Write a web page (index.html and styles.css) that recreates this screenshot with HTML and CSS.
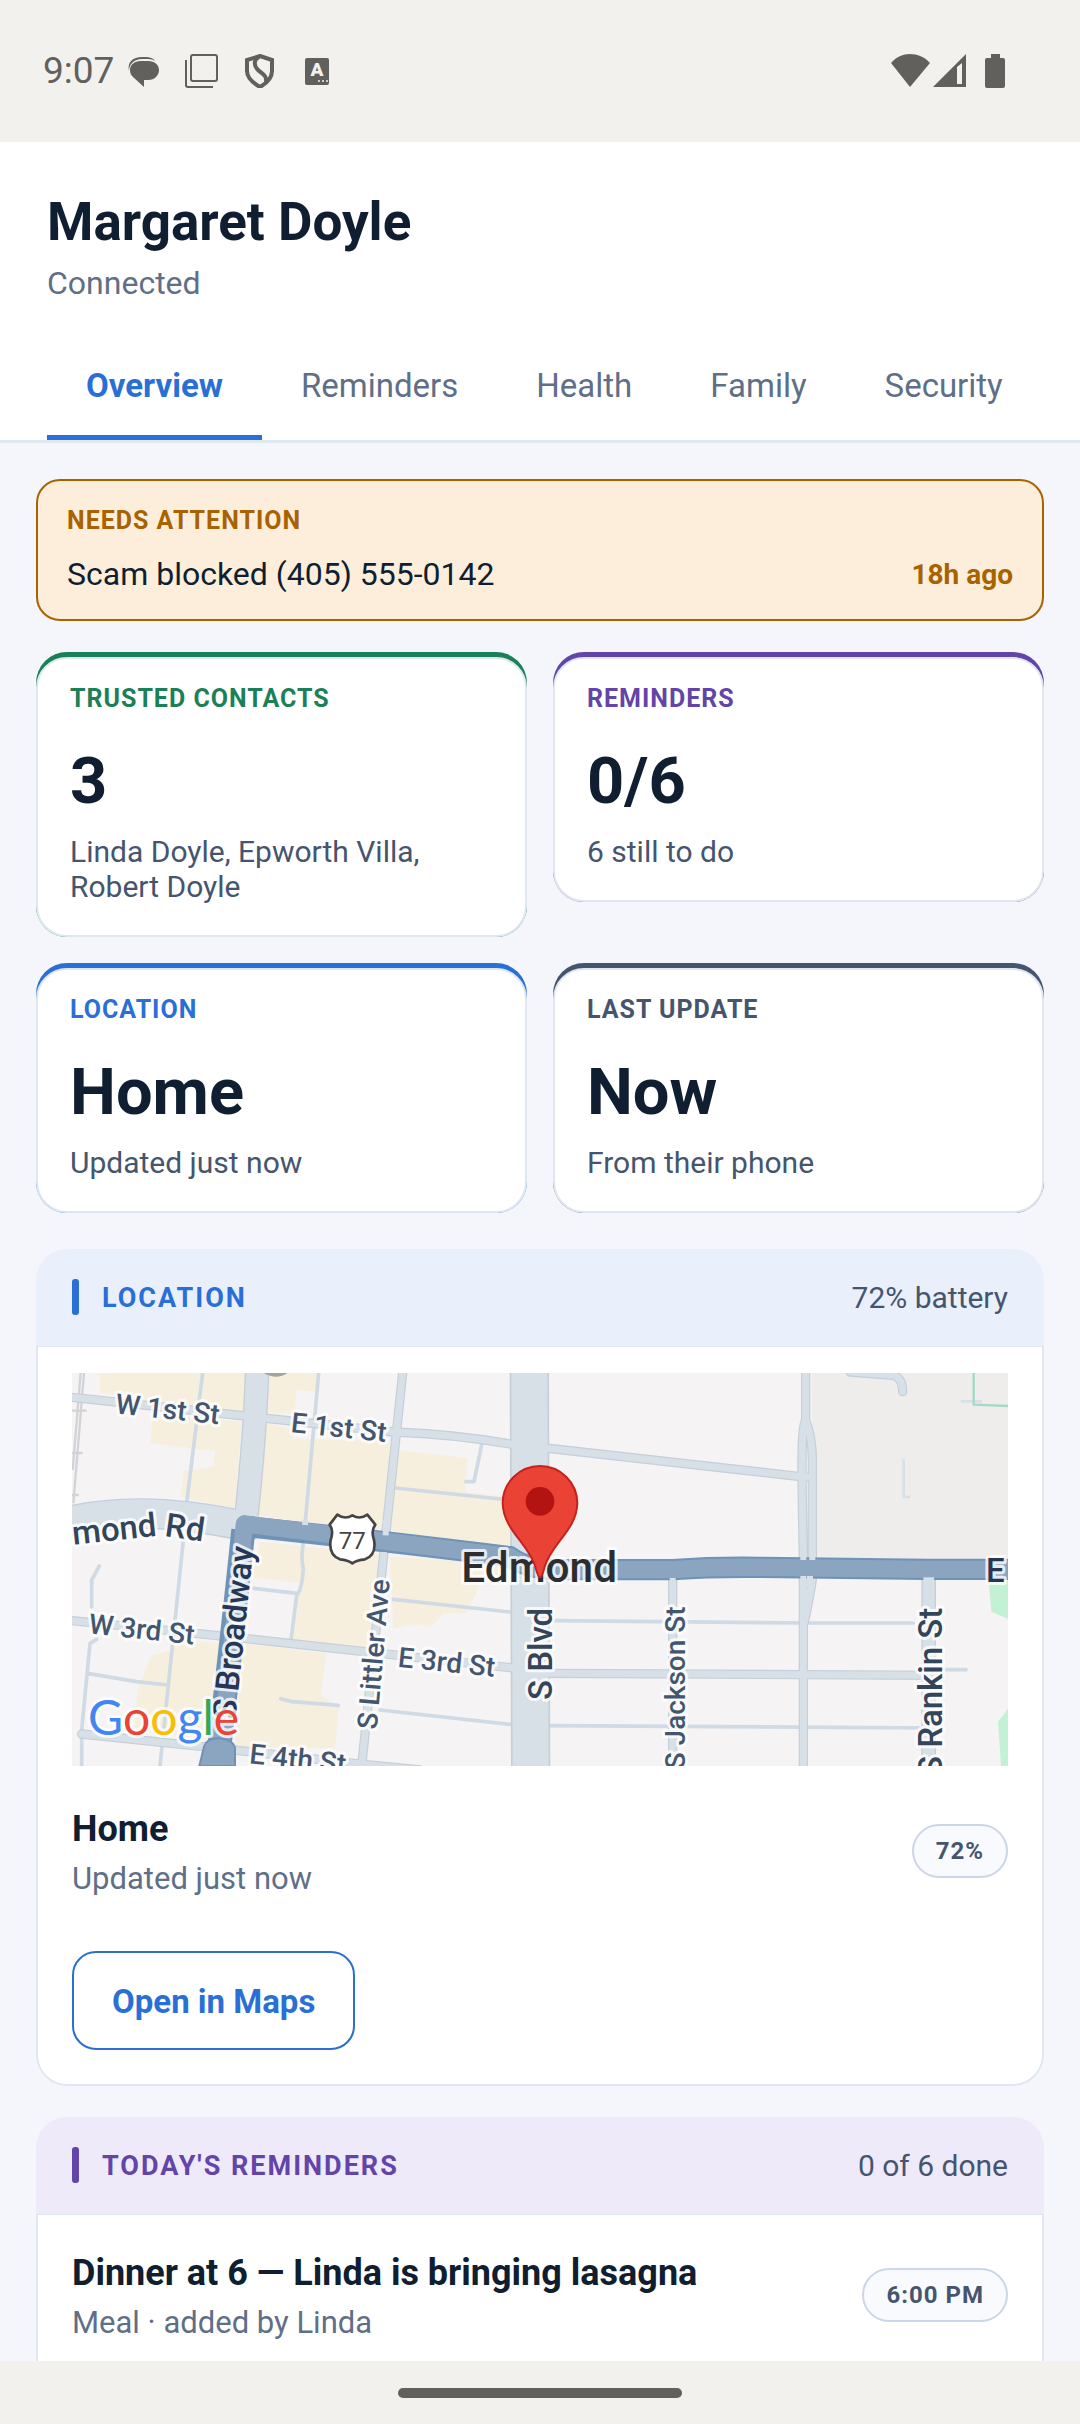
FILE: index.html
```html
<!DOCTYPE html>
<html lang="en">
<head>
    <meta charset="UTF-8">
    <meta name="viewport" content="width=device-width, initial-scale=1.0">
    <title>Margaret Doyle</title>
    <link rel="stylesheet" href="styles.css">
</head>
<body>

    <!-- System status bar -->
    <div class="status-bar">
        <div class="status-left">
            <span class="time">9:07</span>
            <svg class="icon" viewBox="0 0 33 34"><path d="M2 17C0 8 6 3 15 3h4c4 0 7 1 9 4-3-2-6-2-9-2h-4C7 5 2 10 2 17z"/><path d="M14 7h7c7 0 11 4 11 9s-4 10-11 10h-4v7L6 23c-2-2-3-4-3-7 0-5 4-9 11-9z"/></svg>
            <svg class="icon line" viewBox="0 0 33 34"><rect x="6" y="1" width="26" height="26" rx="2"/><path d="M1 6v25q0 2 2 2h25"/></svg>
            <svg class="icon shield" viewBox="0 0 33 34"><path d="M17 2l12 4v11c0 7-5 12-12 16C10 29 4 24 4 17V6z"/><path d="M16 3c-6 3-5 9-1 13s9 5 8 12"/></svg>
            <svg class="icon" viewBox="0 0 33 34"><rect x="4" y="4" width="24" height="27" rx="2"/><text class="badge-letter" x="16" y="22">A</text><g class="dots"><circle cx="18" cy="27" r="1"/><circle cx="22" cy="27" r="1"/><circle cx="26" cy="27" r="1"/></g></svg>
        </div>
        <div class="status-right">
            <div class="network">
                <svg class="wifi" viewBox="0 0 39 34"><path d="M0 9C5 3 12 0 19 0s15 3 20 9L19 33z"/></svg>
                <svg class="icon" viewBox="0 0 33 34"><path fill-rule="evenodd" d="M0 33L33 0v33zM24 13v17h5V9z"/></svg>
            </div>
            <svg class="battery" viewBox="0 0 20 34"><path d="M6 0h9v4h3q2 0 2 2v26q0 2-2 2H2q-2 0-2-2V6q0-2 2-2h4z"/></svg>
        </div>
    </div>

    <!-- Header -->
    <header>
        <h1>Margaret Doyle</h1>
        <p class="connection">Connected</p>
        <nav>
            <a href="#overview" class="tab active">Overview</a>
            <a href="#reminders" class="tab">Reminders</a>
            <a href="#health" class="tab">Health</a>
            <a href="#family" class="tab">Family</a>
            <a href="#security" class="tab">Security</a>
        </nav>
    </header>

    <main>
        <!-- Alert -->
        <section class="alert">
            <h2 class="label">Needs attention</h2>
            <div class="alert-row">
                <p>Scam blocked (405) 555-0142</p>
                <span class="ago">18h ago</span>
            </div>
        </section>

        <!-- Summary cards -->
        <div class="stats">
            <section class="stat green">
                <div class="stat-body">
                    <h2 class="label">Trusted contacts</h2>
                    <p class="value">3</p>
                    <p class="note">Linda Doyle, Epworth Villa, Robert Doyle</p>
                </div>
            </section>
            <section class="stat purple">
                <div class="stat-body">
                    <h2 class="label">Reminders</h2>
                    <p class="value">0/6</p>
                    <p class="note">6 still to do</p>
                </div>
            </section>
            <section class="stat blue">
                <div class="stat-body">
                    <h2 class="label">Location</h2>
                    <p class="value">Home</p>
                    <p class="note">Updated just now</p>
                </div>
            </section>
            <section class="stat slate">
                <div class="stat-body">
                    <h2 class="label">Last update</h2>
                    <p class="value">Now</p>
                    <p class="note">From their phone</p>
                </div>
            </section>
        </div>

        <!-- Location -->
        <section class="panel blue">
            <div class="panel-head">
                <h2>Location</h2>
                <span>72% battery</span>
            </div>
            <div class="panel-body">
                <div class="map-wrap">
                <svg class="map" viewBox="36 39 2808 1179" role="img" aria-label="Map of Edmond">
                    <rect class="land" x="36" y="39" width="2808" height="1179"/>

                    <!-- blocks -->
                    <g class="shops">
                        <path d="M118 39H556L548 156 410 142 120 98V68z"/>
                        <path d="M278 160L545 185 523 445 362 410 372 333 460 320 465 272 272 250z"/>
                        <path d="M627 39H782L776 95 710 90 704 160 617 158z"/>
                        <path d="M612 190L700 205V238L990 242 975 520 590 465z"/>
                        <path d="M1016 270L1222 295 1215 395 1350 412V560L988 520z"/>
                        <path d="M600 545L975 585 930 870 690 840 712 700 728 670 572 652z"/>
                        <path d="M990 590L1350 610V650L1270 655 1218 760 1150 760 1115 800 1060 792 1000 806z"/>
                        <path d="M548 850L800 880 782 1005 835 1045 826 1165 525 1160z"/>
                        <path d="M345 838L482 850 450 1140 225 1110 232 990 275 885 340 870z"/>
                    </g>
                    <path class="campus" d="M2255 39H2844V600H2262z"/>
                    <path class="park" d="M2786 660H2844V776L2794 755zM2844 1046V1218H2823L2814 1085z"/>

                    <!-- alleys -->
                    <g class="alley">
                        <path d="M428 39L380 430M370 540L300 1218M776 39L735 495M730 545Q722 600 730 625 726 690 710 705L693 840M580 685L710 700"/>
                        <path d="M1005 384L1350 420M1265 255L1242 365H1218M1000 718L1350 756M960 1050L1360 1094M662 1016L690 1024 835 1036"/>
                        <path d="M118 618L95 660V740M110 838L90 850 65 1110V1218M82 940L230 965 325 975"/>
                        <path d="M1480 782L2240 789H2560M1465 1097L2640 1104M2640 929H2718"/>
                    </g>
                    <g class="path">
                        <path d="M2702 124H2766M2531 298V411H2550"/>
                    </g>
                    <path class="trail" d="M2741 39V134L2844 138"/>
                    <g class="rail">
                        <path d="M72 39L40 430M62 39L38 330M36 152H80M36 279H68M36 405H56"/>
                    </g>

                    <!-- street casings -->
                    <g class="casing">
                        <path d="M36 112L556 168 1000 216Q1180 222 1350 252L2240 352" stroke-width="28"/>
                        <path d="M36 782L560 836 1360 924M1465 940L2640 946" stroke-width="28"/>
                        <path d="M65 1122L430 1160 880 1210 1080 1230" stroke-width="28"/>
                        <path d="M1028 39L977 525M972 575L905 1218" stroke-width="28"/>
                        <path d="M1838 650V1218M2237 39V180Q2226 200 2226 300 2226 400 2230 590V1218M2237 180Q2257 230 2257 300V590M2258 650Q2252 700 2232 790" stroke-width="28"/>
                        <path d="M2606 650V1218" stroke-width="44"/>
                        <path d="M2370 36L2500 46Q2528 54 2528 95" stroke-width="28"/>
                        <path d="M591 39Q585 230 558 480" stroke-width="74"/>
                        <path d="M20 485Q250 430 560 500" stroke-width="92"/>
                        <path d="M1408 39L1412 1218" stroke-width="118"/>
                    </g>

                    <!-- street fills -->
                    <g class="street">
                        <path d="M36 112L556 168 1000 216Q1180 222 1350 252L2240 352" stroke-width="21"/>
                        <path d="M36 782L560 836 1360 924M1465 940L2640 946" stroke-width="21"/>
                        <path d="M65 1122L430 1160 880 1210 1080 1230" stroke-width="21"/>
                        <path d="M1028 39L977 525M972 575L905 1218" stroke-width="21"/>
                        <path d="M2237 39V180Q2226 200 2226 300 2226 400 2230 590V1218M2237 180Q2257 230 2257 300V590M2258 650Q2252 700 2232 790" stroke-width="21"/>
                        <path d="M1838 650V1218" stroke-width="21"/>
                        <path d="M2606 650V1218" stroke-width="36"/>
                        <path d="M2370 36L2500 46Q2528 54 2528 95" stroke-width="21"/>
                        <path d="M591 39Q585 230 558 480" stroke-width="66"/>
                        <path d="M20 485Q250 430 560 500" stroke-width="84"/>
                        <path d="M1408 39L1412 1218" stroke-width="108"/>
                    </g>

                    <!-- highway -->
                    <g class="highway-edge">
                        <path d="M562 500Q900 535 1350 590 1400 628 1500 629H1840Q1960 620 2100 622L2600 628H2844"/>
                        <path d="M550 510Q520 800 470 1230" stroke-width="72"/>
                    </g>
                    <g class="highway">
                        <path d="M555 492Q900 535 1350 590 1400 628 1500 629H1840Q1960 620 2100 622L2600 628H2844"/>
                        <path d="M553 492Q524 800 474 1230"/>
                    </g>
                    <path class="highway-end" d="M418 1218L432 1160Q440 1135 475 1135 520 1138 525 1165V1218z"/>
                    <g class="crossing">
                        <path d="M736 480L735 495M978 480L977 526M972 576L968 620M2230 570V600M2257 570V600M2230 648V700M2250 648V680M1838 654V690" stroke-width="18"/>
                        <path d="M2606 652V690" stroke-width="32"/>
                    </g>

                    <!-- street names -->
                    <g class="names small">
                        <text transform="translate(164 160) rotate(6)">W 1st St</text>
                        <text transform="translate(691 216) rotate(6)">E 1st St</text>
                        <text transform="translate(84 820) rotate(6)">W 3rd St</text>
                        <text transform="translate(1012 920) rotate(6)">E 3rd St</text>
                        <text transform="translate(566 1210) rotate(6)">E 4th St</text>
                        <text transform="translate(950 1110) rotate(-85)">S Littler Ave</text>
                        <text transform="translate(1874 1228) rotate(-90)">S Jackson St</text>
                    </g>
                    <g class="names large">
                        <text transform="translate(40 554) rotate(-6)">mond</text>
                        <text transform="translate(312 528) rotate(8)">Rd</text>
                        <text transform="translate(1476 1020) rotate(-90)">S Blvd</text>
                        <text transform="translate(2646 1248) rotate(-90)">S Rankin St</text>
                        <text class="route" transform="translate(526 1080) rotate(-84)">S Broadway</text>
                        <text class="route" x="2778" y="665">E</text>
                    </g>
                    <text class="city" x="1204" y="667">Edmond</text>

                    <!-- US 77 shield -->
                    <path class="route-shield" d="M832 464Q855 480 877 466 900 480 922 464L946 494Q932 512 942 540 950 585 915 598 890 600 877 610 864 600 840 598 805 585 812 540 822 512 809 494z"/>
                    <text class="route-number" x="877" y="567">77</text>

                    <!-- pin -->
                    <path class="pin" d="M1440 318A112 112 0 0 0 1328 430C1330 510 1405 550 1426 620Q1434 652 1440 652T1454 620C1475 550 1550 510 1552 430A112 112 0 0 0 1440 318z"/>
                    <circle class="pin-dot" cx="1440" cy="424" r="43"/>

                    <path class="place" d="M612 39H682Q650 62 612 39z"/>
                    <text class="google" x="84" y="1124"><tspan class="g-blue">G</tspan><tspan class="g-red">o</tspan><tspan class="g-yellow">o</tspan><tspan class="g-blue">g</tspan><tspan class="g-green">l</tspan><tspan class="g-red">e</tspan></text>
                </svg>
                </div>
                <div class="row">
                    <div>
                        <h3>Home</h3>
                        <p>Updated just now</p>
                    </div>
                    <span class="pill">72%</span>
                </div>
                <button type="button">Open in Maps</button>
            </div>
        </section>

        <!-- Reminders -->
        <section class="panel purple">
            <div class="panel-head">
                <h2>Today's reminders</h2>
                <span>0 of 6 done</span>
            </div>
            <div class="panel-body">
                <div class="row">
                    <div>
                        <h3>Dinner at 6 — Linda is bringing lasagna</h3>
                        <p>Meal · added by Linda</p>
                    </div>
                    <span class="pill">6:00 PM</span>
                </div>
            </div>
        </section>
    </main>

    <!-- Gesture bar -->
    <div class="gesture-bar"><div class="handle"></div></div>

</body>
</html>
```
FILE: styles.css
```css
* {
    box-sizing: border-box;
    margin: 0;
    padding: 0;
}

body {
    display: flex;
    flex-direction: column;
    height: 100vh;
    overflow: hidden;
    background-color: #f4f6fb;
    color: #0f1e30;
    font-family: Roboto, "Liberation Sans", sans-serif;
}

/* Status bar */
.status-bar {
    display: flex;
    flex-shrink: 0;
    justify-content: space-between;
    padding: 48px 75px 48px 43px;
    background-color: #f3f1ed;
    color: #62605c;
}

.status-left,
.status-right,
.network {
    display: flex;
    align-items: center;
}

.status-left {
    gap: 25px;
}

.status-right {
    gap: 19px;
}

.network {
    gap: 3px;
}

.time {
    margin-right: -12px;
    font-size: 37px;
    line-height: 46px;
}

.status-bar svg {
    height: 34px;
    fill: #62605c;
}

.icon {
    width: 33px;
}

.wifi {
    width: 39px;
}

.battery {
    width: 20px;
}

.status-bar .line,
.status-bar .shield {
    fill: none;
    stroke: #62605c;
    stroke-width: 2;
}

.status-bar .shield {
    stroke-width: 4;
}

.badge-letter {
    fill: #f3f1ed;
    font-size: 19px;
    font-weight: 900;
    text-anchor: middle;
}

.dots {
    fill: #f3f1ed;
}

/* Header */
header {
    flex-shrink: 0;
    padding: 48px 47px 0;
    background-color: #fff;
    border-bottom: 3px solid #dfe7f0;
}

h1 {
    font-size: 53px;
    line-height: 64px;
}

.connection {
    margin-top: 10px;
    color: #5f6f87;
    font-size: 32px;
    line-height: 38px;
}

nav {
    display: flex;
    margin-top: 35px;
}

.tab {
    padding: 29px 39px;
    border-bottom: 5px solid transparent;
    color: #5f6f87;
    font-size: 33px;
    line-height: 40px;
    text-decoration: none;
}

.tab.active {
    border-color: #2a6fd6;
    color: #2a6fd6;
    font-weight: 700;
}

main {
    flex: 1;
    min-height: 0;
    overflow: hidden;
    padding: 36px;
}

.label {
    font-size: 25px;
    font-weight: 700;
    letter-spacing: 1px;
    line-height: 30px;
    text-transform: uppercase;
}

/* Alert */
.alert {
    margin-bottom: 31px;
    padding: 25px 29px;
    background-color: #fceedb;
    border: 2px solid #a86200;
    border-radius: 24px;
}

.alert .label,
.ago {
    color: #a86200;
}

.alert-row {
    display: flex;
    align-items: center;
    justify-content: space-between;
    margin-top: 19px;
    font-size: 32px;
    line-height: 39px;
}

.ago {
    font-size: 28px;
    font-weight: 700;
}

/* Summary cards */
.stats {
    display: grid;
    grid-template-columns: 1fr 1fr;
    align-items: start;
    gap: 26px;
    margin-bottom: 36px;
}

.green {
    --accent: #1b8057;
}

.purple {
    --accent: #6344a8;
    --tint: #efeaf9;
}

.blue {
    --accent: #2a6fd6;
    --tint: #e9f0fc;
}

.slate {
    --accent: #46556e;
}

.stat {
    padding-top: 5px;
    background-color: var(--accent);
    border-radius: 31px;
}

.stat-body {
    padding: 25px 32px 31px;
    background-color: #fff;
    border: 2px solid #e0e7f1;
    border-radius: 31px;
}

.stat .label {
    color: var(--accent);
}

.value {
    margin: 28px 0 14px;
    font-size: 65px;
    font-weight: 700;
    line-height: 78px;
}

.note {
    color: #46556e;
    font-size: 30px;
    line-height: 35px;
}

/* Panels */
.panel {
    margin-bottom: 31px;
    overflow: hidden;
    border-radius: 31px;
}

.panel-head {
    display: flex;
    align-items: center;
    justify-content: space-between;
    padding: 30px 36px 29px;
    background-color: var(--tint);
    border-bottom: 1px solid #e0e7f1;
    color: #46556e;
    font-size: 30px;
    line-height: 38px;
}

.panel-head h2 {
    display: flex;
    gap: 23px;
    color: var(--accent);
    font-size: 27px;
    letter-spacing: 2px;
    text-transform: uppercase;
}

.panel-head h2::before {
    content: "";
    width: 7px;
    height: 36px;
    background-color: var(--accent);
    border-radius: 3px;
}

.panel-body {
    padding: 0 34px 34px;
    background-color: #fff;
    border: 2px solid #e0e7f1;
    border-top: none;
    border-radius: 0 0 31px 31px;
}

.row {
    display: flex;
    align-items: center;
    justify-content: space-between;
    padding: 34px 0 20px;
}

.row h3 {
    font-size: 36px;
    line-height: 48px;
}

.row p {
    margin-top: 8px;
    color: #5f6f87;
    font-size: 31px;
    line-height: 36px;
}

.pill {
    padding: 10px 22px;
    background-color: #f8fafe;
    border: 2px solid #ccd6e6;
    border-radius: 27px;
    color: #46556e;
    font-size: 24px;
    font-weight: 700;
    letter-spacing: 1px;
    line-height: 30px;
}

button {
    display: block;
    margin-top: 34px;
    padding: 29px 38px 27px;
    background-color: #fff;
    border: 2px solid #2a6fd6;
    border-radius: 24px;
    color: #2a6fd6;
    font-family: inherit;
    font-size: 33px;
    font-weight: 700;
    line-height: 39px;
    cursor: pointer;
}

/* Map */
.map-wrap {
    padding: 26px 0 5px;
}

.map {
    display: block;
    width: 100%;
}

.map path {
    stroke-linejoin: round;
}

.land { fill: #f5f3f4; }
.shops { fill: #f6efdd; }
.campus { fill: #eeedeb; }
.park { fill: #c3f1d5; }

.alley, .path, .trail, .rail, .casing, .street, .crossing, .highway, .highway-edge {
    fill: none;
}

.alley { stroke: #cfdae4; stroke-width: 11; stroke-linecap: round; }
.path { stroke: #d7e0e7; stroke-width: 8; }
.trail { stroke: #a3dac5; stroke-width: 7; }
.rail { stroke: #d2d3d6; stroke-width: 7; }
.casing { stroke: #c4cfd8; stroke-linecap: round; }
.street { stroke: #d7e0e7; stroke-linecap: round; }
.crossing { stroke: #d7e0e7; }
.highway-edge { stroke: #6f92b7; stroke-width: 64; }
.highway { stroke: #8ba5c1; stroke-width: 52; stroke-linecap: round; }
.highway-end { fill: #8ba5c1; stroke: #6f92b7; stroke-width: 6; }

.names, .city, .google {
    paint-order: stroke;
    stroke: #fff;
    stroke-opacity: .8;
    stroke-width: 18;
    stroke-linejoin: round;
}

.names { font-weight: 500; }
.small { fill: #44566e; font-size: 84px; }
.large { fill: #33455a; font-size: 99px; }
.route { fill: #253656; }
.city { fill: #2c2d31; font-size: 127px; font-weight: 500; }

.route-shield { fill: #fff; stroke: #444; stroke-width: 8; }
.route-number { fill: #444; font-size: 72px; text-anchor: middle; }
.pin { fill: #ea4335; stroke: #c5221f; stroke-width: 6; }
.pin-dot { fill: #b31412; }
.place { fill: #a6a29f; }

.google {
    font-family: Lato, "Open Sans", sans-serif;
    font-size: 144px;
    font-weight: 400;
}

.g-blue { fill: #4285f4; }
.g-red { fill: #ea4335; }
.g-yellow { fill: #fbbc04; }
.g-green { fill: #34a853; }

/* Gesture bar */
.gesture-bar {
    flex-shrink: 0;
    padding: 27px 0 26px;
    background-color: #f3f1ed;
}

.handle {
    width: 284px;
    height: 10px;
    margin: 0 auto;
    background-color: #62605c;
    border-radius: 5px;
}
```
